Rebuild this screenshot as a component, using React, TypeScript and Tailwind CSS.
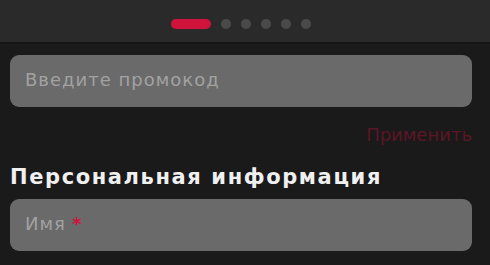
import React from "react";

export default function App() {
  const font = { fontFamily: '"DejaVu Sans", "Noto Sans", sans-serif' };
  return (
    <div className="w-[490px] h-[265px] overflow-hidden bg-[#1a1a1b]" style={font}>
      <div className="h-[44px] bg-[#2a2a2b] flex items-center justify-center gap-[10px] pt-[6px] pr-[8px] border-b-2 border-[#141415]">
        <div className="w-[40px] h-[10px] rounded-full bg-[#d0133b]" />
        <div className="w-[10px] h-[10px] rounded-full bg-[#4a4a4b]" />
        <div className="w-[10px] h-[10px] rounded-full bg-[#4a4a4b]" />
        <div className="w-[10px] h-[10px] rounded-full bg-[#4a4a4b]" />
        <div className="w-[10px] h-[10px] rounded-full bg-[#4a4a4b]" />
        <div className="w-[10px] h-[10px] rounded-full bg-[#4a4a4b]" />
      </div>
      <div className="pl-[10px] pr-[18px] pt-[11px] flex flex-col">
        <div className="h-[52px] rounded-[9px] bg-[#6a6a6a] flex items-center px-[15px] pb-[2px]">
          <span className="text-[18px] leading-[22px] tracking-[1px] text-[#a2a2a2]">Введите промокод</span>
        </div>
        <div className="flex justify-end mt-[18px]">
          <span className="text-[18px] leading-[20px] text-[#5c1526]">Применить</span>
        </div>
        <div className="mt-[20px] text-[21px] leading-[24px] font-bold tracking-[1.6px] text-[#f0f0f0]">
          Персональная информация
        </div>
        <div className="mt-[10px] h-[52px] rounded-[9px] bg-[#6a6a6a] flex items-center px-[15px] pb-[2px]">
          <span className="text-[18px] leading-[22px] tracking-[1px] text-[#a2a2a2]">Имя</span>
          <span className="ml-[6px] text-[18px] leading-[22px] font-bold text-[#d0133b]">*</span>
        </div>
      </div>
    </div>
  );
}
